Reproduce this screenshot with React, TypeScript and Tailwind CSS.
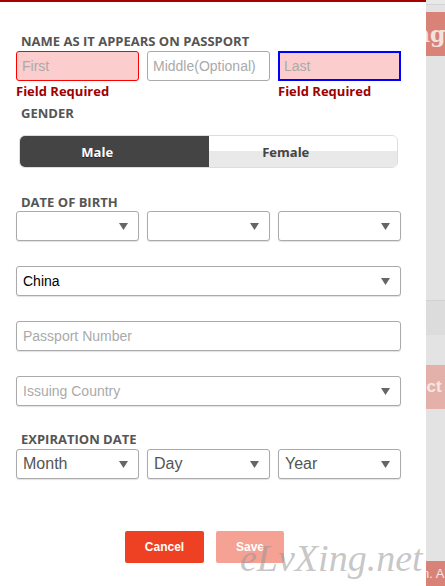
import React from "react";

const label = "pl-[5px] h-[16px] leading-[16px] text-[13px] font-bold text-[#555] font-['Open_Sans',sans-serif]";

function Arrow() {
  return (
    <svg width="9" height="7" viewBox="0 0 9 7" className="shrink-0">
      <path d="M0 0 H9 L4.5 7 Z" fill="#666" />
    </svg>
  );
}

function Select({ text, muted, big }: { text?: string; muted?: boolean; big?: boolean }) {
  return (
    <div className="h-[30px] flex items-center justify-between pl-[6px] pr-[10px] border border-[#aaa] rounded-[3px] bg-white shadow-[0_1px_1px_rgba(0,0,0,0.12)]">
      <span
        className={
          (big ? "text-[16px] text-[#555] " : "text-[14px] ") +
          (muted ? "text-[#aaa] " : big ? "" : "text-black ") +
          "font-['Liberation_Sans',Arial,sans-serif]"
        }
      >
        {text}
      </span>
      <Arrow />
    </div>
  );
}

export default function App() {
  return (
    <div className="relative w-[445px] h-[586px] flex overflow-hidden bg-[#e3e3e3]">
      <div className="w-[426px] shrink-0 bg-white border-t-2 border-[#a80000] flex flex-col px-[16px] pr-[25px]">
        <div className={label + " mt-[31px]"}>NAME AS IT APPEARS ON PASSPORT</div>
        <div className="grid grid-cols-3 gap-[8px] mt-[2px] font-['Liberation_Sans',Arial,sans-serif] text-[14px]">
          <div className="h-[30px] flex items-center pl-[5px] bg-[#fbcdcd] border border-[#f00] rounded-[3px] text-[#aaa]">First</div>
          <div className="h-[30px] flex items-center pl-[5px] bg-white border border-[#aaa] rounded-[3px] text-[#aaa]">Middle(Optional)</div>
          <div className="h-[30px] flex items-center pl-[4px] bg-[#fbcdcd] border-2 border-[#0000ff] text-[#aaa]">Last</div>
        </div>
        <div className="grid grid-cols-3 gap-[8px] mt-[2px] h-[16px] leading-[16px] text-[13px] font-bold text-[#a00000] font-['Open_Sans',sans-serif]">
          <span>Field Required</span>
          <span></span>
          <span>Field Required</span>
        </div>
        <div className={label + " mt-[6px]"}>GENDER</div>
        <div className="mt-[14px] ml-[3px] mr-[3px] h-[33px] flex border border-[#ddd] rounded-[6px] overflow-hidden font-['Open_Sans',sans-serif] text-[13px] font-bold">
          <div className="flex-1 bg-[#444] text-white flex items-center justify-center pr-[34px] pt-[3px] [text-shadow:0_1px_0_rgba(0,0,0,0.5)]">Male</div>
          <div className="flex-1 bg-[linear-gradient(to_bottom,#fff_48%,#e9e9e9_48%)] text-[#444] flex items-center justify-center pr-[34px] pt-[3px]">Female</div>
        </div>
        <div className={label + " mt-[26px]"}>DATE OF BIRTH</div>
        <div className="grid grid-cols-3 gap-[8px] mt-[1px]">
          <Select />
          <Select />
          <Select />
        </div>
        <div className="mt-[25px]">
          <Select text="China" />
        </div>
        <div className="mt-[25px] h-[30px] flex items-center pl-[6px] border border-[#aaa] rounded-[3px] shadow-[0_1px_1px_rgba(0,0,0,0.12)] text-[14px] text-[#aaa] font-['Liberation_Sans',Arial,sans-serif]">
          Passport Number
        </div>
        <div className="mt-[25px]">
          <Select text="Issuing Country" muted />
        </div>
        <div className={label + " mt-[25px]"}>EXPIRATION DATE</div>
        <div className="grid grid-cols-3 gap-[8px] mt-[2px]">
          <Select text="Month" big />
          <Select text="Day" big />
          <Select text="Year" big />
        </div>
        <div className="mt-[52px] flex justify-center gap-[12px] pr-[8px] font-['Liberation_Sans',Arial,sans-serif] text-[12px] font-bold text-white">
          <div className="w-[79px] h-[32px] flex items-center justify-center bg-[#ee4124] rounded-[2px]">Cancel</div>
          <div className="w-[68px] h-[32px] flex items-center justify-center bg-[#f5a193] rounded-[2px]">Save</div>
        </div>
      </div>
      <div className="flex-1 min-w-0 flex flex-col overflow-hidden">
        <div className="h-[4px] bg-[#e9e9e9]" />
        <div className="h-[1px] bg-[#d4d4d4]" />
        <div className="h-[7px]" />
        <div className="h-[44px] bg-[#d98378] flex items-center overflow-hidden whitespace-nowrap text-[22px] font-bold text-[#f3e3df] font-['DejaVu_Serif',serif]">
          <span className="ml-[-12px]">ng</span>
        </div>
        <div className="h-[244px]" />
        <div className="h-[1px] bg-[#d2d2d2]" />
        <div className="h-[34px] bg-[#dcdcdc]" />
        <div className="h-[30px]" />
        <div className="h-[44px] bg-[#e3b1aa] flex items-center overflow-hidden whitespace-nowrap text-[17px] font-bold text-[#f6e6e3] font-['Liberation_Sans',Arial,sans-serif]">
          <span className="ml-[-9px]">ect</span>
        </div>
        <div className="h-[152px]" />
        <div className="flex-1 bg-[#d98378] flex items-center overflow-hidden whitespace-nowrap text-[13px] text-[#f6e6e3] font-['Liberation_Sans',Arial,sans-serif]">
          <span className="ml-[-4px]">n. A</span>
        </div>
      </div>
      <div className="absolute left-[240px] top-[530px] text-[38px] italic text-[rgba(150,150,150,0.55)] font-['Liberation_Serif',serif] pointer-events-none">
        eLvXing.net
      </div>
    </div>
  );
}
